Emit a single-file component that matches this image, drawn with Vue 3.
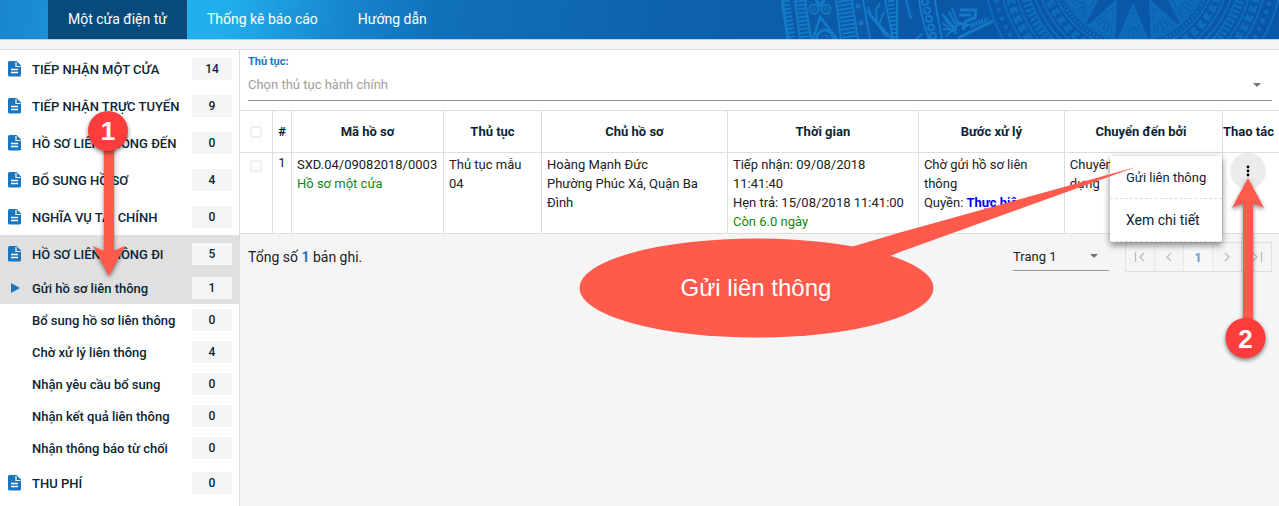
<script setup>
import { ref } from 'vue'

const tabs = ['Một cửa điện tử', 'Thống kê báo cáo', 'Hướng dẫn']

const menu = [
  { label: 'TIẾP NHẬN MỘT CỬA', count: 14 },
  { label: 'TIẾP NHẬN TRỰC TUYẾN', count: 9 },
  { label: 'HỒ SƠ LIÊN THÔNG ĐẾN', count: 0 },
  { label: 'BỔ SUNG HỒ SƠ', count: 4 },
  { label: 'NGHĨA VỤ TÀI CHÍNH', count: 0 },
  { label: 'HỒ SƠ LIÊN THÔNG ĐI', count: 5, active: true },
  { label: 'Gửi hồ sơ liên thông', count: 1, sub: true, active: true },
  { label: 'Bổ sung hồ sơ liên thông', count: 0, sub: true },
  { label: 'Chờ xử lý liên thông', count: 4, sub: true },
  { label: 'Nhận yêu cầu bổ sung', count: 0, sub: true },
  { label: 'Nhận kết quả liên thông', count: 0, sub: true },
  { label: 'Nhận thông báo từ chối', count: 0, sub: true },
  { label: 'THU PHÍ', count: 0 },
]

const procedure = ref('')
const page = ref('1')

const rays = Array.from({ length: 14 }, (_, i) => i * (360 / 14))
const range = (n) => Array.from({ length: n }, (_, i) => i)
</script>

<template>
  <div class="page">
    <header class="topbar">
      <svg class="drum" width="520" height="39" viewBox="760 0 520 39" aria-hidden="true">
        <g fill="none" stroke="#147ac4">
          <path d="M783 0 789 39" stroke-width="3" />
          <path d="M787 0 793 39" stroke-width="7" stroke-dasharray="2 2" />
          <path d="M796 0 801 39M806 0 812 39" stroke-width="2" />
          <path d="M801 0 807 39" stroke-width="9" stroke-dasharray="2 2" />
          <circle cx="815" cy="9" r="4.5" stroke-width="2" />
          <circle cx="815" cy="9" r="1.5" />
          <circle cx="827" cy="9" r="4.5" stroke-width="2" />
          <circle cx="827" cy="9" r="1.5" />
          <path d="M817 0 821 5 826 0" stroke-width="3" />
          <path d="M814 39 821 17 838 39" stroke-width="2.5" />
          <circle cx="826" cy="38" r="8" stroke-width="3" />
          <circle cx="826" cy="38" r="3" />
          <path d="M837 0 842 39M853 0 859 39" stroke-width="2" />
          <path d="M845 0 851 39" stroke-width="14" stroke-dasharray="2 2" />
          <circle cx="859" cy="6" r="1.5" stroke-width="2" />
          <circle cx="862" cy="23" r="1.5" stroke-width="2" />
          <path d="M864 0 871 39M868 11 888 37M874 20 869 7M878 23 877 10 881 3M880 25 885 12M870 13 893 39" stroke-width="2" />
          <path d="M886 0 894 39M898 0V39" stroke-width="2" />
          <path d="M892 0 896 39" stroke-width="7" stroke-dasharray="2 2" />
          <path d="M907 0 912 19M917 39 923 34" stroke-width="2" />
          <path d="M920 0Q923 21 930 39M936 0Q939 20 943 39M931 0" stroke-width="2" />
          <circle v-for="n in range(5)" :key="n" :cx="926 + n * 2" :cy="2 + n * 8.5" r="3" stroke-width="2" />
          <path d="M943 14 957 29M946 20 957 31M950 12 958 27M943 23 958 34M953 8 960 26M947 36 958 26M944 29 958 30" stroke-width="2" />
          <path d="M961 10H977L976 18 967 21 964 30M960 15H972M959 23 968 25 963 29" stroke-width="3" />
          <path d="M971 26 989 19" stroke-width="5" stroke-dasharray="2 1" />
          <path d="M959 38 994 21" stroke-width="3" />
        </g>
        <g transform="translate(1134 -34)" fill="none" stroke="#0f6cbb">
          <circle r="149" stroke-width="2" />
          <circle r="141" stroke-width="4" stroke-dasharray="4 5" />
          <circle r="134" stroke-width="2" />
          <circle r="127" stroke-width="8" stroke-dasharray="7 3" />
          <circle r="127" stroke-width="3" stroke="#0a5aaa" stroke-dasharray="2 8" />
          <circle r="120" stroke-width="2" />
          <circle r="112" stroke-width="9" stroke-dasharray="3 2" />
          <circle r="108" stroke-width="2" />
          <circle r="103" stroke-width="2" />
          <circle r="97" stroke-width="2" />
          <circle r="90" stroke-width="8" stroke-dasharray="7 3" />
          <circle r="90" stroke-width="3" stroke="#0a5aaa" stroke-dasharray="2 8" />
          <circle r="83" stroke-width="2" />
          <circle r="79" stroke-width="4" stroke-dasharray="2 2" />
          <circle r="75" stroke-width="2" />
          <g v-for="r in rays" :key="r" :transform="`rotate(${r})`">
            <path d="M-15 73 0 38 15 73Z" fill="#0f6cbb" />
            <path d="M-10 71 0 46 10 71" stroke="#0a5aaa" stroke-dasharray="2 2" />
            <path d="M-5 70V66Q0 56 5 66V70M0 72V63" stroke="#0a5aaa" />
          </g>
        </g>
      </svg>
      <nav class="tabs">
        <a v-for="(t, i) in tabs" :key="t" href="#" :class="{ current: i === 0 }">{{ t }}</a>
      </nav>
    </header>

    <div class="layout">
      <aside class="sidebar">
        <a
          v-for="m in menu"
          :key="m.label"
          href="#"
          class="item"
          :class="{ sub: m.sub, active: m.active }"
        >
          <span class="icon">
            <svg v-if="!m.sub" width="14" height="16" viewBox="0 0 14 16" aria-hidden="true">
              <path fill="#1976bf" d="M1.500 0H8.500L13 4.500V14a1.500 1.500 0 0 1-1.500 1.500H1.500A1.500 1.500 0 0 1 0 14V1.500A1.500 1.500 0 0 1 1.500 0Z" />
              <path d="M8 1V5.500H12.500" fill="none" stroke="#fff" stroke-width="1.200" />
              <path d="M3 8.500H10M3 11.500H10" fill="none" stroke="#fff" stroke-width="1.500" />
            </svg>
            <svg v-else-if="m.active" width="14" height="12" viewBox="0 0 14 12" aria-hidden="true">
              <path d="M3 1 12 6 3 11Z" fill="#1976bf" />
            </svg>
          </span>
          <span class="label">{{ m.label }}</span>
          <span class="count">{{ m.count }}</span>
        </a>
      </aside>

      <main class="content">
        <div class="filter">
          <label for="procedure">Thủ tục:</label>
          <div class="field">
            <select id="procedure" v-model="procedure">
              <option value="">Chọn thủ tục hành chính</option>
            </select>
            <svg class="caret" width="8" height="4" viewBox="0 0 8 4" aria-hidden="true"><path d="M0 0H8L4 4Z" /></svg>
          </div>
        </div>

        <table>
          <colgroup>
            <col class="c-check" /><col class="c-no" /><col class="c-code" /><col class="c-proc" />
            <col class="c-owner" /><col class="c-time" /><col class="c-step" /><col /><col class="c-act" />
          </colgroup>
          <thead>
            <tr>
              <th><input type="checkbox" aria-label="Chọn tất cả" /></th>
              <th>#</th>
              <th>Mã hồ sơ</th>
              <th>Thủ tục</th>
              <th>Chủ hồ sơ</th>
              <th>Thời gian</th>
              <th>Bước xử lý</th>
              <th class="tight">Chuyển đến bởi</th>
              <th class="tight">Thao tác</th>
            </tr>
          </thead>
          <tbody>
            <tr>
              <td class="mid"><input type="checkbox" aria-label="Chọn hồ sơ 1" /></td>
              <td class="mid">1</td>
              <td>SXD.04/09082018/0003<br /><span class="green">Hồ sơ một cửa</span></td>
              <td>Thủ tục mẫu 04</td>
              <td>Hoàng Mạnh Đức<br />Phường Phúc Xá, Quận Ba Đình</td>
              <td>Tiếp nhận: 09/08/2018 11:41:40<br />Hẹn trả: 15/08/2018 11:41:00<br /><span class="green">Còn 6.0 ngày</span></td>
              <td>Chờ gửi hồ sơ liên thông<br />Quyền: <b class="right">Thực hiện</b></td>
              <td>Chuyên viên Sở Xây<br />dựng</td>
              <td class="mid action">
                <button class="more" type="button" aria-label="Thao tác">
                  <svg width="4" height="14" viewBox="0 0 4 14" aria-hidden="true">
                    <circle cx="2" cy="3" r="1.400" /><circle cx="2" cy="7" r="1.400" /><circle cx="2" cy="11" r="1.400" />
                  </svg>
                </button>
                <div class="popup">
                  <button type="button">Gửi liên thông</button>
                  <button type="button" class="large">Xem chi tiết</button>
                </div>
              </td>
            </tr>
          </tbody>
        </table>

        <footer class="summary">
          <p>Tổng số <b>1</b> bản ghi.</p>
          <div class="pageselect">
            <select v-model="page" aria-label="Trang">
              <option value="1">Trang 1</option>
            </select>
            <svg class="caret" width="8" height="4" viewBox="0 0 8 4" aria-hidden="true"><path d="M0 0H8L4 4Z" /></svg>
          </div>
          <div class="pager">
            <button type="button" aria-label="Trang đầu"><svg width="12" height="10" viewBox="0 0 12 10"><path d="M1.500 0V10M10 1 6 5 10 9" /></svg></button>
            <button type="button" aria-label="Trang trước"><svg width="12" height="10" viewBox="0 0 12 10"><path d="M8 1 4 5 8 9" /></svg></button>
            <button type="button" class="on">1</button>
            <button type="button" aria-label="Trang sau"><svg width="12" height="10" viewBox="0 0 12 10"><path d="M4 1 8 5 4 9" /></svg></button>
            <button type="button" aria-label="Trang cuối"><svg width="12" height="10" viewBox="0 0 12 10"><path d="M2 1 6 5 2 9M10.500 0V10" /></svg></button>
          </div>
        </footer>
      </main>
    </div>

    <svg class="notes" width="1279" height="400" viewBox="0 0 1279 400">
      <g class="shadow">
        <path d="M104 140H114V251L125 246 109 276 93 246 104 251Z" />
        <path d="M1243 330V203L1232 208 1248 178 1264 208 1253 203V330Z" />
      </g>
      <path d="M851 247 900 232.500 1136 167 900 252 888 257Z" />
      <ellipse cx="756.500" cy="288" rx="177" ry="49.500" />
      <text class="callout" x="756" y="296">Gửi liên thông</text>
      <g class="shadow pin">
        <circle cx="108" cy="131" r="20" />
        <circle cx="1245.500" cy="338" r="20" />
      </g>
      <text class="num" x="108" y="140">1</text>
      <text class="num" x="1245.500" y="348">2</text>
    </svg>
  </div>
</template>

<style>
body {
  margin: 0;
  background: #f5f5f5;
}
</style>

<style scoped>
.page {
  position: relative;
  display: flex;
  flex-direction: column;
  min-height: 100vh;
  overflow: hidden;
  font-family: Roboto, "Noto Sans", sans-serif;
  font-size: 13px;
  color: #212121;
}
.page * {
  box-sizing: border-box;
}
a {
  text-decoration: none;
  color: inherit;
}
button,
select {
  font: inherit;
  color: inherit;
  background: none;
  border: 0;
  padding: 0;
  margin: 0;
}
.topbar {
  position: relative;
  height: 40px;
  flex: none;
  border-bottom: 1px solid #b5d3ec;
  background: linear-gradient(100deg, #1a86d0 0, #1b8ad3 30px, #21b1ee 185px, #21aeec 225px, #1683cb 350px, #1070b9 440px, #0e63ae 640px, #0a57a7 900px, #0a57a7 100%);
}
.drum {
  position: absolute;
  right: 0;
  top: 0;
}
.tabs {
  display: flex;
  height: 39px;
  padding-left: 48px;
  color: #fff;
  font-size: 14px;
  position: relative;
}
.tabs a {
  display: flex;
  align-items: center;
  padding: 0 20px 2px;
}
.tabs .current {
  background: #084a7c;
}
.layout {
  display: flex;
  flex: 1;
  margin-top: 9px;
  border-top: 1px solid #ddd;
}
.sidebar {
  width: 240px;
  flex: none;
  background: #fff;
  border-right: 1px solid #ddd;
}
.item {
  display: flex;
  align-items: center;
  height: 37px;
  padding: 0 7px 0 8px;
  font-weight: 500;
  color: #0b2536;
}
.item .label {
  padding-top: 2px;
}
.item.sub {
  height: 32px;
}
.item.sub .label {
  padding-top: 0;
}
.item.active {
  background: #e0e0e0;
}
.icon {
  width: 24px;
  display: flex;
}
.label {
  flex: 1;
  white-space: nowrap;
}
.count {
  width: 40px;
  height: 22px;
  line-height: 22px;
  background: #f5f5f5;
  text-align: center;
  font-size: 12px;
}
.content {
  flex: 1;
  min-width: 0;
}
.filter {
  background: #fff;
  padding: 5px 7px 9px 8px;
}
.filter label {
  display: block;
  font-size: 11px;
  line-height: 14px;
  font-weight: 700;
  color: #1976bf;
}
.field {
  display: flex;
  align-items: center;
  height: 32px;
  border-bottom: 1px solid #949494;
  padding-right: 11px;
}
.field select,
.pageselect select {
  flex: 1;
  appearance: none;
  outline: none;
}
.field select {
  color: #9e9e9e;
  height: 30px;
}
.caret {
  fill: #757575;
}
table {
  width: 100%;
  table-layout: fixed;
  border-spacing: 0;
  background: #fff;
  border-top: 1px solid #ddd;
}
.c-check { width: 33px; }
.c-no { width: 19px; }
.c-code { width: 14.63%; }
.c-proc { width: 9.43%; }
.c-owner { width: 17.9%; }
.c-time { width: 18.38%; }
.c-step { width: 14.05%; }
.c-act { width: 56px; }
th,
td {
  border-right: 1px solid #ddd;
  border-bottom: 1px solid #ddd;
}
th:last-child,
td:last-child {
  border-right: 0;
}
th {
  height: 42px;
  padding: 0;
  font-weight: 700;
  color: #0b2536;
  white-space: nowrap;
}
th.tight {
  padding-right: 5px;
}
td {
  padding: 2px 5px;
  line-height: 19px;
  vertical-align: top;
}
td.mid {
  text-align: center;
  padding: 0;
}
input {
  appearance: none;
  display: block;
  width: 12px;
  height: 12px;
  border: 2px solid #f0f0f0;
  border-radius: 2px;
  margin: 0 auto;
}
td.mid input {
  margin: 7px auto 0;
}
.green {
  color: #128712;
}
.right {
  color: #0000f5;
}
td.action {
  position: relative;
}
.more {
  width: 36px;
  height: 36px;
  display: flex;
  align-items: center;
  justify-content: center;
  border-radius: 50%;
  background: #ececec;
  margin-left: 7px;
}
.popup {
  position: absolute;
  right: 57px;
  top: 3px;
  width: 112px;
  background: #fff;
  box-shadow: 0 4px 6px rgba(0, 0, 0, 0.3), 0 1px 8px rgba(0, 0, 0, 0.2);
  color: #0b2536;
}
.popup button {
  display: block;
  width: 100%;
  height: 43px;
  padding: 0 16px;
  text-align: left;
  border-bottom: 1px dashed #ddd;
  white-space: nowrap;
}
.popup .large {
  font-size: 14px;
}
.summary {
  display: flex;
  align-items: flex-start;
  padding: 8px 7px 0 8px;
}
.summary p {
  flex: 1;
  margin: 0;
  font-size: 14px;
  line-height: 31px;
}
.summary b {
  color: #1976bf;
}
.pageselect {
  display: flex;
  align-items: center;
  width: 96px;
  height: 29px;
  padding-right: 11px;
  margin-right: 16px;
  border-bottom: 1px solid #949494;
}
.pager {
  display: flex;
  height: 30px;
  border: 1px solid #e0e0e0;
}
.pager button {
  width: 29px;
  display: flex;
  align-items: center;
  justify-content: center;
  border-right: 1px solid #e8e8e8;
}
.pager button:last-child {
  border-right: 0;
}
.pager .on {
  background: #f8f8f8;
  color: #5a9fd4;
  font-weight: 700;
}
.pager path {
  fill: none;
  stroke: #bdbdbd;
  stroke-width: 1.3;
}
.notes {
  position: absolute;
  left: 0;
  top: 0;
  pointer-events: none;
  fill: #ff5a4b;
}
.shadow {
  filter: drop-shadow(0 2px 2px rgba(0, 0, 0, 0.5));
}
.pin {
  fill: #fc3d3b;
}
.callout,
.num {
  fill: #fff;
  text-anchor: middle;
  font-family: "Liberation Sans", sans-serif;
  font-size: 24px;
}
.num {
  font-weight: 700;
  font-size: 26px;
}
</style>
